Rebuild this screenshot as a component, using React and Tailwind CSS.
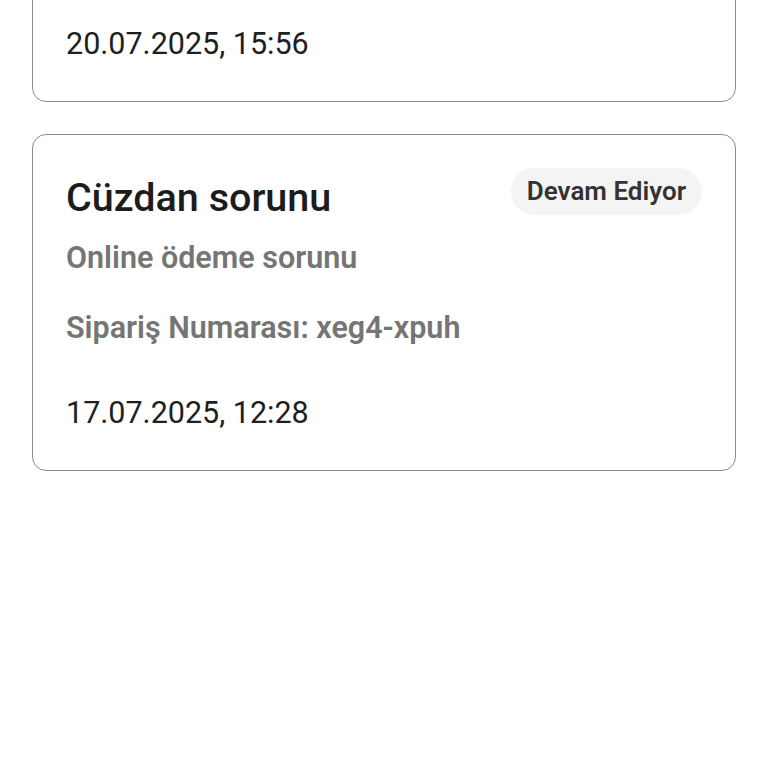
export default function App() {
  return (
    <div className="w-[768px] h-[768px] overflow-hidden bg-white" style={{ fontFamily: "Roboto, 'Noto Sans', sans-serif" }}>
      <div className="px-[32px] flex flex-col gap-[32px]">
        <div className="-mt-[20px] border border-[#8a8a8a] rounded-[14px] px-[33px] pt-[45px] pb-[39px]">
          <div className="text-[30.5px] leading-[36px] text-[#1f1f1f]">20.07.2025, 15:56</div>
        </div>
        <div className="border border-[#8a8a8a] rounded-[14px] px-[33px] pt-[33px] pb-[39px]">
          <div className="flex items-start justify-between">
            <div className="mt-[8px] text-[39.5px] leading-[44px] font-medium text-[#1c1c1c]">Cüzdan sorunu</div>
            <div className="h-[47px] px-[16px] rounded-full bg-[#f4f4f4] flex items-center text-[26px] font-semibold text-[#333333]">Devam Ediyor</div>
          </div>
          <div className="mt-[20px] text-[30.5px] leading-[36px] font-semibold text-[#757575]">Online ödeme sorunu</div>
          <div className="mt-[34px] text-[30.5px] leading-[36px] font-semibold text-[#757575]">Sipariş Numarası: xeg4-xpuh</div>
          <div className="mt-[49px] text-[30.5px] leading-[36px] text-[#1f1f1f]">17.07.2025, 12:28</div>
        </div>
      </div>
    </div>
  );
}
